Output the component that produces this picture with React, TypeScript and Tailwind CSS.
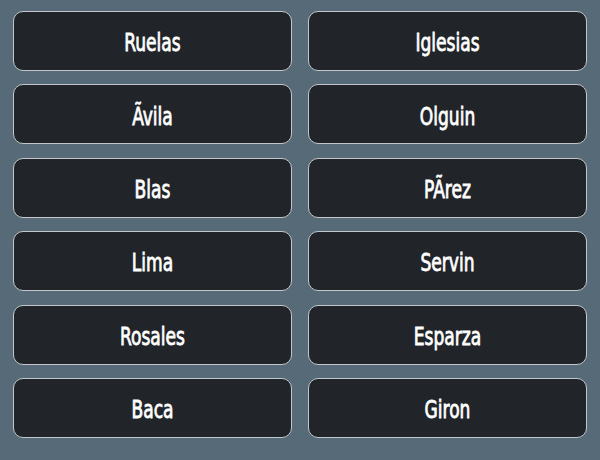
const NAMES = [
  "Ruelas",
  "Iglesias",
  "Ãvila",
  "Olguin",
  "Blas",
  "PÃrez",
  "Lima",
  "Servin",
  "Rosales",
  "Esparza",
  "Baca",
  "Giron",
];

export default function App() {
  return (
    <div className="w-[600px] h-[460px] bg-[#566b77] px-[13px] pt-[11px]">
      <div className="grid grid-cols-2 gap-x-[16px] gap-y-[13.4px]">
        {NAMES.map((name) => (
          <button
            key={name}
            className="h-[60px] rounded-[10px] bg-[#212529] border border-[#c3c7cb] text-white flex items-center justify-center pt-[3px]"
          >
            <span
              className="text-[19px] font-normal scale-y-[1.27] inline-block [-webkit-text-stroke:0.6px_#fff]"
              style={{ fontFamily: '"DejaVu Sans Condensed", "DejaVu Sans", sans-serif' }}
            >
              {name}
            </span>
          </button>
        ))}
      </div>
    </div>
  );
}
